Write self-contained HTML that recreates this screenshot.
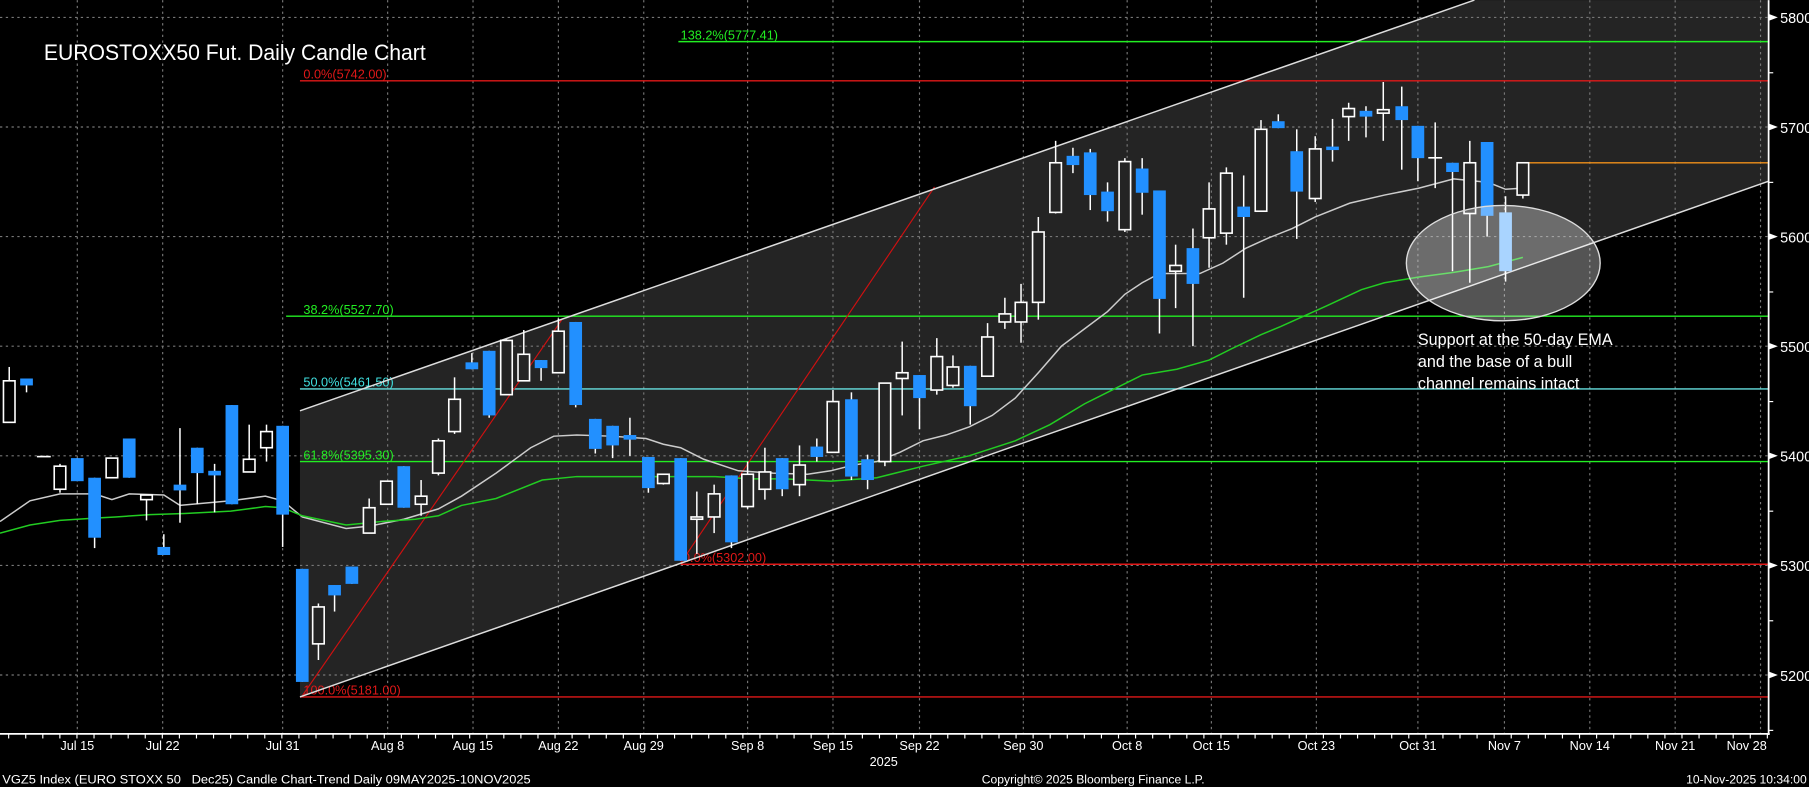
<!DOCTYPE html>
<html><head><meta charset="utf-8"><style>
html,body{margin:0;padding:0;background:#000;overflow:hidden}
svg{display:block}
text{font-family:"Liberation Sans",sans-serif}
</style></head><body>
<svg id="c" width="1809" height="787" viewBox="0 0 1568 682" xmlns="http://www.w3.org/2000/svg">
<rect width="1568" height="682" fill="#000"/>
<polygon points="260,356 1278,0 1533,0 1533,157 260,604" fill="#242424"/>
<g id="grid" stroke="#777" stroke-width="1" stroke-dasharray="2,3"></g>
<line x1="588" y1="36" x2="1533" y2="36" stroke="#22ee22" stroke-width="1.2"/>
<line x1="260" y1="70" x2="1533" y2="70" stroke="#e01818" stroke-width="1.2"/>
<line x1="248" y1="274" x2="1533" y2="274" stroke="#22ee22" stroke-width="1.2"/>
<line x1="260" y1="337" x2="1533" y2="337" stroke="#66e0e0" stroke-width="1.2"/>
<line x1="260" y1="400" x2="1533" y2="400" stroke="#22ee22" stroke-width="1.2"/>
<line x1="590" y1="489" x2="1533" y2="489" stroke="#e01818" stroke-width="1.2"/>
<line x1="260" y1="604" x2="1533" y2="604" stroke="#e01818" stroke-width="1.2"/>
<line x1="1324" y1="141" x2="1533" y2="141" stroke="#f0901a" stroke-width="1.2"/>
<text x="590" y="34" font-size="11" fill="#22ee22">138.2%(5777.41)</text>
<text x="263" y="68" font-size="11" fill="#e01818">0.0%(5742.00)</text>
<text x="263" y="272" font-size="11" fill="#22ee22">38.2%(5527.70)</text>
<text x="263" y="335" font-size="11" fill="#40e0e0">50.0%(5461.50)</text>
<text x="263" y="398" font-size="11" fill="#22ee22">61.8%(5395.30)</text>
<text x="592" y="487" font-size="11" fill="#e01818">0.0%(5302.00)</text>
<text x="263" y="602" font-size="11" fill="#e01818">100.0%(5181.00)</text>
<line x1="262" y1="603" x2="487" y2="277" stroke="#d01010" stroke-width="1"/>
<line x1="590" y1="488" x2="810" y2="162" stroke="#d01010" stroke-width="1"/>
<line x1="260" y1="356" x2="1278" y2="0" stroke="#ddd" stroke-width="1.3"/>
<line x1="260" y1="604" x2="1533" y2="157" stroke="#ddd" stroke-width="1.3"/>
<polyline fill="none" stroke="#ccc" stroke-width="1.3" points="0,452 26,434 52,428 82,428 97,433 112,428 142,429 156,438 200,434 230,430 245,434 262,448 300,458 320,456 350,450 380,441 400,430 430,410 460,388 480,378 500,377 530,378 560,380 575,385 590,388 610,398 640,408 670,410 700,411 720,408 740,403 760,400 780,392 800,382 820,377 840,370 860,360 880,345 900,323 920,300 940,285 960,270 975,255 990,245 1005,237 1040,237 1060,228 1080,215 1100,206 1120,198 1140,188 1170,176 1200,169 1230,163 1260,155 1290,158 1305,164 1320,163"/>
<polyline fill="none" stroke="#22cc22" stroke-width="1.3" points="0,462 26,455 52,451 82,449 100,448 130,446 160,445 200,443 230,439 245,440 262,447 300,455 330,452 360,450 380,447 400,438 430,432 470,416 500,413 540,413 575,413 620,413 650,415 680,415 720,417 760,414 800,404 840,395 880,382 910,368 940,350 960,340 990,325 1020,320 1048,312 1068,302 1093,290 1110,283 1150,265 1180,251 1200,245 1230,240 1260,236 1290,231 1320,223"/>
<g id="candles"></g>
<ellipse cx="1303" cy="228" rx="84" ry="50" fill="rgba(255,255,255,0.33)" stroke="#ddd" stroke-width="1.2"/>
<text font-size="14" fill="#fff"><tspan x="1229" y="299">Support at the 50-day EMA</tspan><tspan x="1229" y="318">and the base of a bull</tspan><tspan x="1229" y="337">channel remains intact</tspan></text>
<text x="38" y="52" font-size="19" fill="#fff" textLength="331" lengthAdjust="spacingAndGlyphs">EUROSTOXX50 Fut. Daily Candle Chart</text>
<line x1="1533" y1="0" x2="1533" y2="637" stroke="#fff" stroke-width="1.5"/>
<line x1="0" y1="636" x2="1534" y2="636" stroke="#fff" stroke-width="1.5"/>
<g id="axis" fill="#fff"></g>
<text x="766" y="664" font-size="11" fill="#fff" text-anchor="middle">2025</text>
<text x="2" y="679" font-size="10.5" fill="#fff" textLength="458" lengthAdjust="spacingAndGlyphs">VGZ5 Index (EURO STOXX 50 &#160;&#160;Dec25) Candle Chart-Trend Daily 09MAY2025-10NOV2025</text>
<text x="851" y="679" font-size="10.5" fill="#fff">Copyright© 2025 Bloomberg Finance L.P.</text>
<text x="1566" y="679" font-size="10.5" fill="#fff" text-anchor="end">10-Nov-2025 10:34:00</text>
<g font-size="11" fill="#fff" text-anchor="middle">
<text x="67" y="650">Jul 15</text><text x="141" y="650">Jul 22</text><text x="245" y="650">Jul 31</text><text x="336" y="650">Aug 8</text><text x="410" y="650">Aug 15</text><text x="484" y="650">Aug 22</text><text x="558" y="650">Aug 29</text><text x="648" y="650">Sep 8</text><text x="722" y="650">Sep 15</text><text x="797" y="650">Sep 22</text><text x="887" y="650">Sep 30</text><text x="977" y="650">Oct 8</text><text x="1050" y="650">Oct 15</text><text x="1141" y="650">Oct 23</text><text x="1229" y="650">Oct 31</text><text x="1304" y="650">Nov 7</text><text x="1378" y="650">Nov 14</text><text x="1452" y="650">Nov 21</text><text x="1514" y="650">Nov 28</text>
</g>
<g font-size="12.5" fill="#fff">
<text x="1543" y="20">5800</text><text x="1543" y="115">5700</text><text x="1543" y="210">5600</text><text x="1543" y="305">5500</text><text x="1543" y="400">5400</text><text x="1543" y="495">5300</text><text x="1543" y="590">5200</text>
</g>
</svg>
<script>
var NS="http://www.w3.org/2000/svg";
function el(p,t,a){var e=document.createElementNS(NS,t);for(var k in a)e.setAttribute(k,a[k]);p.appendChild(e);return e;}
var g=document.getElementById('grid');
[15,110,205,300,395,490,585].forEach(function(y){el(g,'line',{x1:0,y1:y,x2:1533,y2:y});});
[67,141,245,336,410,484,558,648,722,797,887,977,1050,1141,1229,1304,1378,1452,1526].forEach(function(x){el(g,'line',{x1:x,y1:0,x2:x,y2:636});});
var ax=document.getElementById('axis');
[15,110,205,300,395,490,585].forEach(function(y){el(ax,'polygon',{points:'1533,'+(y-3)+' 1533,'+(y+3)+' 1541,'+y});});
[62.5,157.5,252.5,347.5,442.5,537.5,632.5].forEach(function(y){el(ax,'rect',{x:1533,y:y,width:4,height:1});});
for(var x=7;x<1533;x+=14.8){el(ax,'rect',{x:x,y:636,width:1,height:4});}
var C=[[8,330,366,318,366,'h'],[23,328,334,328,340,'b'],[38,395,396,395,396,'d'],[52,404,424,402,427,'h'],[67,397,417,397,417,'b'],[82,414,466,414,475,'b'],[97,397,414,397,414,'h'],[112,380,414,380,414,'b'],[127,429,433,429,451,'h'],[142,474,481,463,481,'b'],[156,420,425,371,453,'b'],[171,388,410,388,437,'b'],[186,408,412,402,444,'b'],[201,351,437,351,437,'b'],[216,398,409,368,409,'h'],[231,374,388,368,400,'h'],[245,369,446,369,474,'b'],[262,493,591,493,591,'b'],[276,526,558,523,572,'h'],[290,507,516,507,530,'b'],[305,491,506,491,506,'b'],[320,440,462,432,462,'h'],[335,417,437,417,437,'h'],[350,404,440,404,440,'b'],[365,430,437,416,447,'h'],[380,382,410,380,412,'h'],[394,346,374,327,376,'h'],[409,314,320,306,320,'b'],[424,304,360,304,362,'b'],[439,295,342,294,342,'h'],[454,307,330,286,330,'h'],[469,312,319,312,330,'b'],[484,287,323,276,323,'h'],[499,279,351,279,353,'b'],[516,363,389,363,393,'b'],[531,369,386,369,397,'b'],[546,377,381,362,395,'b'],[562,396,423,396,427,'b'],[575,411,419,411,420,'h'],[590,397,486,397,486,'b'],[604,448,450,426,480,'h'],[619,428,448,420,462,'h'],[634,412,470,412,475,'b'],[648,411,439,400,441,'h'],[663,409,424,388,433,'h'],[678,397,424,397,430,'b'],[693,403,420,386,430,'h'],[708,387,396,380,400,'b'],[722,348,392,338,392,'h'],[738,346,413,340,416,'b'],[752,398,416,394,424,'b'],[767,332,400,332,404,'h'],[782,323,328,296,360,'h'],[797,325,345,325,372,'b'],[812,309,338,293,342,'h'],[826,318,334,308,336,'h'],[841,317,352,317,368,'b'],[856,292,326,280,326,'h'],[871,272,279,258,285,'h'],[885,262,279,246,297,'h'],[900,201,262,188,277,'h'],[915,141,184,122,185,'h'],[930,135,143,128,150,'b'],[945,132,169,129,182,'b'],[960,166,183,158,192,'b'],[975,140,199,137,201,'h'],[990,146,167,137,186,'b'],[1005,165,259,165,289,'b'],[1019,230,235,212,267,'h'],[1034,215,246,198,300,'b'],[1048,181,206,158,232,'h'],[1063,150,202,145,212,'h'],[1078,179,188,152,258,'b'],[1093,112,183,104,183,'h'],[1108,105,111,99,111,'b'],[1124,131,166,112,207,'b'],[1140,129,172,118,175,'h'],[1155,127,129,103,140,'b'],[1169,94,101,89,122,'h'],[1184,96,101,92,119,'b'],[1199,95,98,71,122,'h'],[1215,92,104,75,147,'b'],[1229,109,137,109,157,'b'],[1244,136,137,106,163,'d'],[1259,141,149,141,235,'b'],[1274,141,185,122,245,'h'],[1289,123,187,123,205,'b'],[1305,184,235,170,244,'l'],[1320,141,169,141,172,'h']];
var cg=document.getElementById('candles');
C.forEach(function(c){
 var x=c[0],t=c[1],b=c[2],wt=c[3],wb=c[4],k=c[5];
 el(cg,'line',{x1:x,y1:wt,x2:x,y2:wb,stroke:'#fff','stroke-width':1.3});
 if(k=='h'){el(cg,'rect',{x:x-5,y:t,width:10,height:Math.max(b-t,2),fill:'#000',stroke:'#fff','stroke-width':1.4});if(x>255)cg.lastChild.setAttribute('fill','#242424');}
 else if(k=='d'){el(cg,'rect',{x:x-6,y:t,width:12,height:1.4,fill:'#fff'});}
 else {el(cg,'rect',{x:x-5.5,y:t,width:11,height:Math.max(b-t,3),fill:k=='l'?'#7fbfff':'#2290ff'});}
});
</script>
</body></html>
